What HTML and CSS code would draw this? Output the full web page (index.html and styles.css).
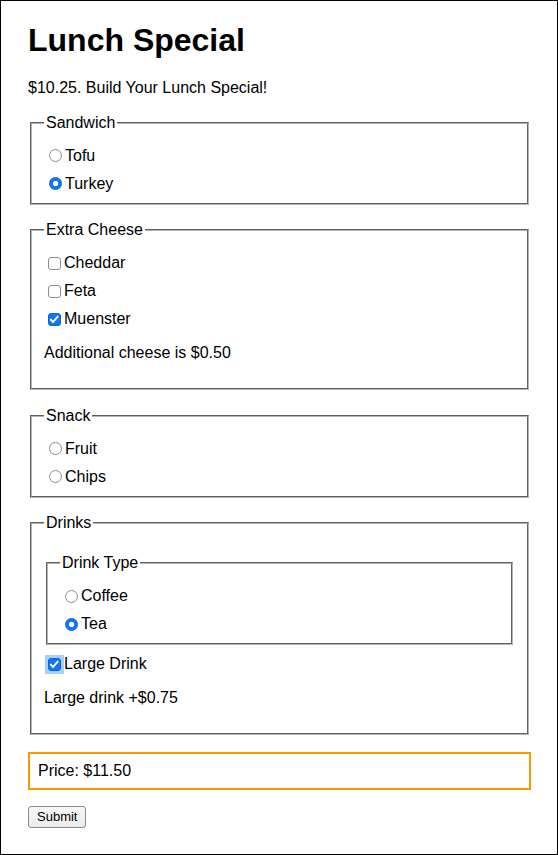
FILE: index.html
```html
<!DOCTYPE html>
<html lang="en">
<head>
<meta charset="utf-8">
<title>Lunch Special</title>
<link rel="stylesheet" href="styles.css">
</head>
<body>
<div class="page">
  <h1 class="title">Lunch Special</h1>
  <p class="intro">$10.25. Build Your Lunch Special!</p>
  <form class="order">
    <fieldset class="group">
      <legend class="group-legend">Sandwich</legend>
      <div class="options">
        <label class="option"><input class="radio" type="radio" name="sandwich">Tofu</label>
        <label class="option"><input class="radio" type="radio" name="sandwich" checked>Turkey</label>
      </div>
    </fieldset>

    <fieldset class="group">
      <legend class="group-legend">Extra Cheese</legend>
      <div class="options">
        <label class="option"><input class="check" type="checkbox">Cheddar</label>
        <label class="option"><input class="check" type="checkbox">Feta</label>
        <label class="option"><input class="check" type="checkbox" checked>Muenster</label>
      </div>
      <p class="note">Additional cheese is $0.50</p>
    </fieldset>

    <fieldset class="group">
      <legend class="group-legend">Snack</legend>
      <div class="options">
        <label class="option"><input class="radio" type="radio" name="snack">Fruit</label>
        <label class="option"><input class="radio" type="radio" name="snack">Chips</label>
      </div>
    </fieldset>

    <fieldset class="group">
      <legend class="group-legend">Drinks</legend>
      <div class="drinks-body">
        <fieldset class="group group-nested">
          <legend class="group-legend">Drink Type</legend>
          <div class="options">
            <label class="option"><input class="radio" type="radio" name="drink">Coffee</label>
            <label class="option"><input class="radio" type="radio" name="drink" checked>Tea</label>
          </div>
        </fieldset>
        <label class="option"><span class="focus-ring"><input class="check check-bare" type="checkbox" checked></span>Large Drink</label>
      </div>
      <p class="note">Large drink +$0.75</p>
    </fieldset>

    <div class="price">Price: $11.50</div>
    <button class="submit" type="button">Submit</button>
  </form>
</div>
</body>
</html>
```

FILE: styles.css
```css
html, body {
  margin: 0;
  padding: 0;
  background: #fff;
}

body {
  font-family: "Liberation Sans", Arial, Helvetica, sans-serif;
  font-size: 16px;
  line-height: 18px;
  color: #000;
}

.page {
  box-sizing: border-box;
  width: 558px;
  height: 855px;
  border: 1px solid #000;
  padding: 0 26px 0 27px;
  overflow: hidden;
}

.title {
  margin: 21px 0 20px;
  font-size: 32px;
  line-height: 37px;
  font-weight: bold;
}

.intro {
  margin: 0 0 16.5px;
}

.order {
  margin: 0;
}

.group {
  margin: 0 2px 16.5px;
  padding: 0 12px 10px;
  border: 2px groove #b4b4b4;
  min-width: 0;
}

.group-legend {
  padding: 0 2px;
  line-height: 18px;
}

.options {
  display: flex;
  flex-direction: column;
  gap: 10px;
  padding-top: 15px;
}

.option {
  display: flex;
  align-items: center;
  height: 18px;
}

.drinks-body {
  display: flex;
  flex-direction: column;
  padding-top: 22px;
}

.group-nested {
  margin: 0 2px 10px;
}

.radio,
.check {
  -webkit-appearance: none;
  appearance: none;
  box-sizing: border-box;
  width: 13px;
  height: 13px;
  border: 1px solid #8d8d8d;
  background: #fff;
  flex: none;
}

.radio {
  border-radius: 50%;
  margin: 0 3px 0 5px;
}

.radio:checked {
  border-color: #0a63d8;
  background: radial-gradient(circle at center, #fff 0 2.4px, #1276f4 3px);
}

.check {
  border-radius: 3px;
  margin: 0 3px 0 4px;
}

.check:checked {
  border-color: #0a63d8;
  background: #1276f4 url("data:image/svg+xml,%3Csvg xmlns='http://www.w3.org/2000/svg' viewBox='0 0 13 13'%3E%3Cpath d='M2.8 6.6l2.3 2.4 4.6-5.4' fill='none' stroke='%23ffffff' stroke-width='1.9' stroke-linecap='round' stroke-linejoin='round'/%3E%3C/svg%3E") center / 13px 13px no-repeat;
}

.focus-ring {
  display: flex;
  padding: 3px;
  margin-left: 1px;
  background: #a9d0f8;
}

.check-bare {
  margin: 0;
}

.note {
  margin: 16px 0;
}

.price {
  border: 2px solid #f99a00;
  padding: 8px;
  line-height: 18px;
  margin: 0 0 16px;
}

.submit {
  font-family: "Liberation Sans", Arial, Helvetica, sans-serif;
  font-size: 13px;
  line-height: 15px;
  color: #000;
  padding: 2px 8px 3px;
  border: 1px solid #8a8a8a;
  border-radius: 3px;
  background: linear-gradient(#f7f7f7, #ececec);
  display: block;
  margin: 0;
}
```
